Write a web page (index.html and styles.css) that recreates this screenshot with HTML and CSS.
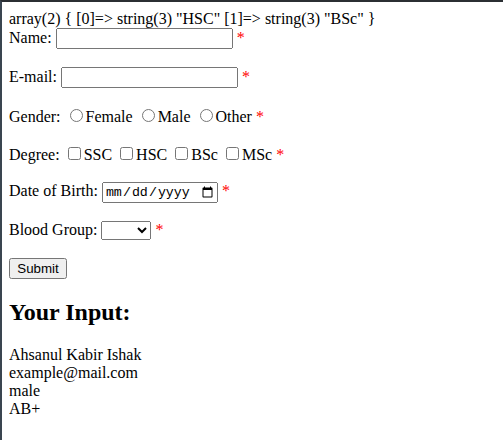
FILE: index.html
```html
<!DOCTYPE html>
<html>
<head>
<meta charset="utf-8">
<link rel="stylesheet" href="styles.css">
</head>
<body>
array(2) { [0]=&gt; string(3) "HSC" [1]=&gt; string(3) "BSc" }
<form class="form">
Name: <input type="text" class="txt"> <span class="error">*</span>
<br><br>
E-mail: <input type="text" class="txt"> <span class="error">*</span>
<br><br>
Gender:
<input type="radio" name="gender" class="radio">Female
<input type="radio" name="gender" class="radio">Male
<input type="radio" name="gender" class="radio">Other
<span class="error">*</span>
<br><br>
Degree:
<input type="checkbox" class="check">SSC
<input type="checkbox" class="check">HSC
<input type="checkbox" class="check">BSc
<input type="checkbox" class="check">MSc
<span class="error">*</span>
<br><br>
Date of Birth: <input type="date" class="date"> <span class="error">*</span>
<br><br>
Blood Group: <select class="sel"><option></option></select> <span class="error">*</span>
<br><br>
<input type="submit" value="Submit" class="btn">
</form>
<h2 class="title">Your Input:</h2>
Ahsanul Kabir Ishak<br>
example@mail.com<br>
male<br>
AB+
</body>
</html>
```
FILE: styles.css
```css
html {
  border-top: 2px solid #2b2f33;
  border-left: 2px solid #3a4550;
  min-height: 100%;
  box-sizing: border-box;
  background: #fff;
}
body {
  margin: 8px 8px 8px 7px;
  font-family: "Liberation Serif", serif;
  font-size: 16px;
  color: #000;
}
.form {
  margin: 0;
}
.txt, .btn, .sel {
  font-family: "Liberation Sans", Arial, sans-serif;
  font-size: 13.333px;
}
.txt {
  box-sizing: border-box;
  width: 177px;
}
.date {
  font-family: "Liberation Mono", monospace;
  font-size: 13.333px;
  box-sizing: border-box;
  width: 116px;
}
.sel {
  box-sizing: border-box;
  width: 50px;
}
.btn {
  box-sizing: border-box;
  width: 58px;
}
.error {
  color: red;
}
.title {
  font-size: 24px;
  font-weight: bold;
  margin: 20px 0;
}
```
